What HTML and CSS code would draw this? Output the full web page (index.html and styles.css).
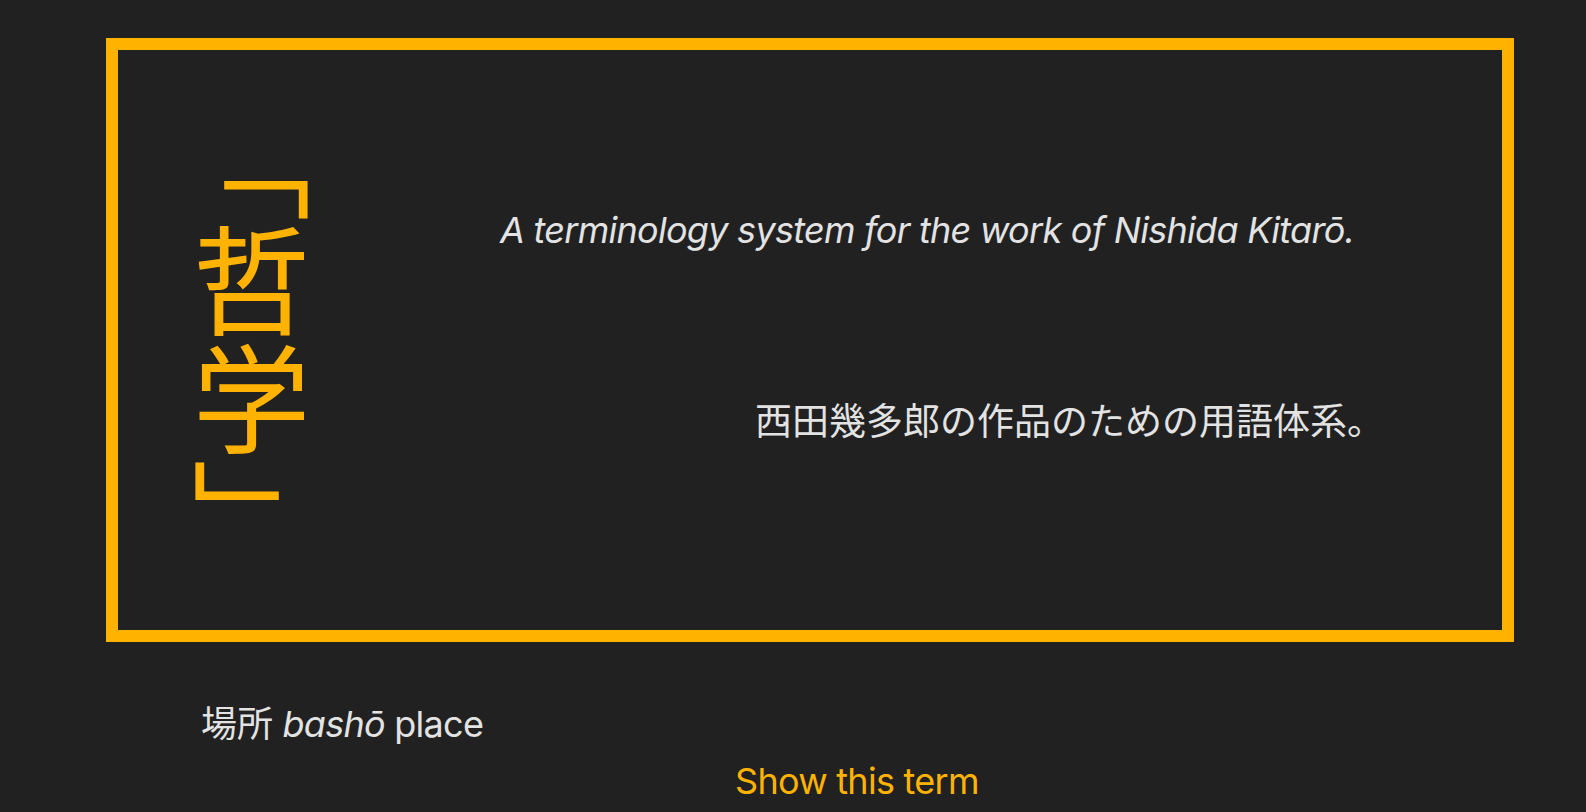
FILE: index.html
```html
<!DOCTYPE html>
<html lang="en">
<head>
<meta charset="utf-8">
<title>哲学</title>
<link rel="stylesheet" href="styles.css">
</head>
<body>
<main class="page">
  <section class="card">
    <h1 class="title" lang="ja">「哲学」</h1>
    <div class="content">
      <p class="tagline-en">A terminology system for the work of Nishida Kitarō.</p>
      <p class="tagline-ja" lang="ja">西田幾多郎の作品のための用語体系。</p>
    </div>
  </section>
  <p class="term"><span lang="ja">場所</span> <em>bashō</em> place</p>
  <button class="show" type="button">Show this term</button>
</main>
</body>
</html>
```

FILE: styles.css
```css
html, body {
  margin: 0;
  padding: 0;
  background: #212121;
}

body {
  font-family: Inter, "Noto Sans", "Noto Sans CJK JP", sans-serif;
  color: #e3e3e3;
}

.page {
  padding: 38px 72px 0 106px;
}

.card {
  box-sizing: border-box;
  height: 604px;
  border: 12px solid #ffb300;
  display: flex;
  align-items: center;
}

.title {
  margin: 0 0 0 74px;
  writing-mode: vertical-rl;
  font-family: "Noto Sans CJK JP", sans-serif;
  font-weight: 400;
  font-size: 118px;
  line-height: 1;
  color: #ffb300;
}

.content {
  flex: 1;
  align-self: stretch;
  display: flex;
  flex-direction: column;
  padding: 159px 118px 0 190px;
}

.tagline-en {
  margin: 0;
  font-style: italic;
  font-size: 36px;
  line-height: 1.2;
  letter-spacing: -0.02em;
  white-space: nowrap;
}

.tagline-ja {
  margin: 145px 0 0;
  text-align: right;
  font-family: "Noto Sans CJK JP", sans-serif;
  font-size: 37px;
  line-height: 1.2;
  white-space: nowrap;
}

.term {
  margin: 58px 0 0 95px;
  font-size: 36px;
  line-height: 1.2;
  letter-spacing: -0.02em;
}

.term span {
  font-family: "Noto Sans CJK JP", sans-serif;
  letter-spacing: 0;
}

.show {
  display: block;
  margin: 14px 0 0 629px;
  padding: 0;
  border: 0;
  background: none;
  font-family: Inter, "Noto Sans", sans-serif;
  font-size: 36px;
  line-height: 1.2;
  letter-spacing: -0.02em;
  color: #ffb300;
  cursor: pointer;
}
```
